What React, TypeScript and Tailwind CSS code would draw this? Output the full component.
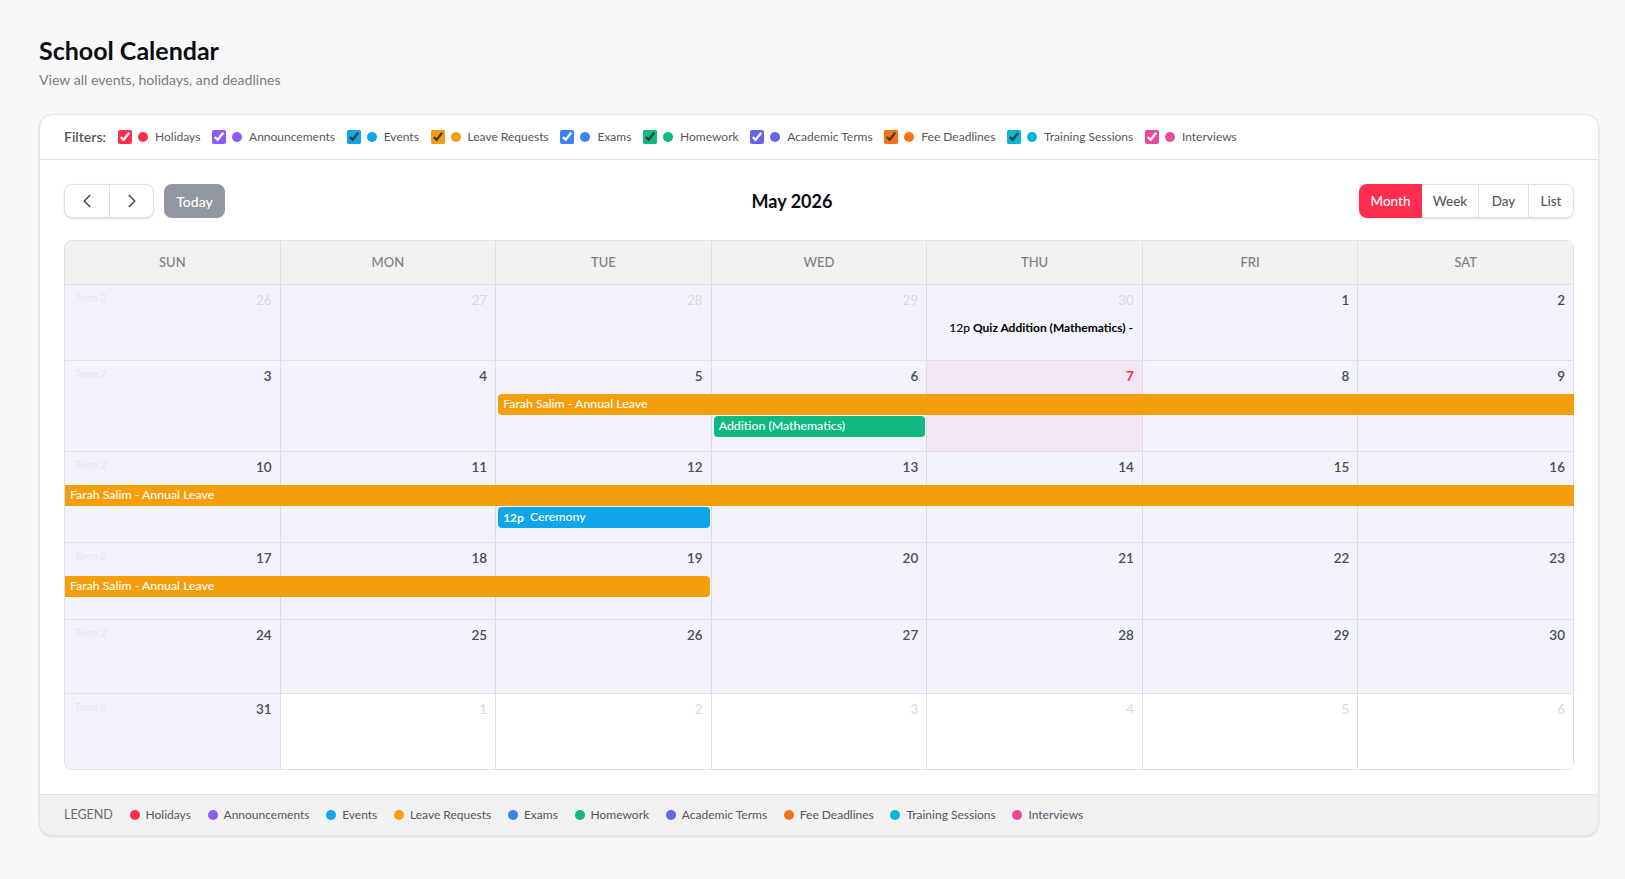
import { ChevronLeft, ChevronRight } from 'lucide-react';

const categories = [
	{ name: 'Holidays', color: '#ff2d4f' },
	{ name: 'Announcements', color: '#8b5cf6' },
	{ name: 'Events', color: '#0ea5e9' },
	{ name: 'Leave Requests', color: '#f59e0b' },
	{ name: 'Exams', color: '#3b82f6' },
	{ name: 'Homework', color: '#10b981' },
	{ name: 'Academic Terms', color: '#6366f1' },
	{ name: 'Fee Deadlines', color: '#f97316' },
	{ name: 'Training Sessions', color: '#06b6d4' },
	{ name: 'Interviews', color: '#ec4899' },
];

const dayNames = ['SUN', 'MON', 'TUE', 'WED', 'THU', 'FRI', 'SAT'];

type Ev = { col: number; span: number; row: number; label: string; time?: string; color: string; left?: boolean; right?: boolean };

const ORANGE = '#f59e0b';

const weeks: { height: string; days: number[]; events: Ev[] }[] = [
	{
		height: 'h-[76px]',
		days: [26, 27, 28, 29, 30, 1, 2],
		events: [{ col: 5, span: 1, row: 2, label: 'Quiz Addition (Mathematics) -', time: '12p', color: '' }],
	},
	{
		height: 'h-[91px]',
		days: [3, 4, 5, 6, 7, 8, 9],
		events: [
			{ col: 3, span: 5, row: 2, label: 'Farah Salim - Annual Leave', color: ORANGE, left: true },
			{ col: 4, span: 1, row: 3, label: 'Addition (Mathematics)', color: '#10b981', left: true, right: true },
		],
	},
	{
		height: 'h-[91px]',
		days: [10, 11, 12, 13, 14, 15, 16],
		events: [
			{ col: 1, span: 7, row: 2, label: 'Farah Salim - Annual Leave', color: ORANGE },
			{ col: 3, span: 1, row: 3, label: 'Ceremony', time: '12p', color: '#0ea5e9', left: true, right: true },
		],
	},
	{
		height: 'h-[77px]',
		days: [17, 18, 19, 20, 21, 22, 23],
		events: [{ col: 1, span: 3, row: 2, label: 'Farah Salim - Annual Leave', color: ORANGE, right: true }],
	},
	{ height: 'h-[74px]', days: [24, 25, 26, 27, 28, 29, 30], events: [] },
	{ height: 'h-[75px]', days: [31, 1, 2, 3, 4, 5, 6], events: [] },
];

function Dot({ color }: { color: string }) {
	return <span className="w-[10px] h-[10px] rounded-full shrink-0" style={{ backgroundColor: color }} />;
}

function Week({ week, index }: { week: (typeof weeks)[number]; index: number }) {
	return (
		<div className={`grid grid-cols-7 grid-rows-[33px_22px_minmax(0,22px)_minmax(0,1fr)] border-b border-[#e0e0e6] last:border-b-0 ${week.height}`}>
			{week.days.map((day, i) => {
				const inMonth = index === 0 ? i >= 5 : index === 5 ? i === 0 : true;
				const isToday = index === 1 && i === 4;
				const shaded = !(index === 5 && i > 0);
				return (
					<div
						key={i}
						className={`row-start-1 row-end-5 flex justify-between items-start pl-[10px] pr-[8px] pt-[5px] border-r border-[#dcdce4] ${isToday ? 'bg-[#f2e6f2]' : shaded ? 'bg-[#f2f3fc]' : 'bg-white'}`}
						style={{ gridColumn: i + 1 }}
					>
						{i === 0 ? <span className="text-[11px] italic text-[#e6e7ec] leading-[16px]">Term 2</span> : <span />}
						<span
							className={`text-[13.5px] leading-[20px] ${isToday ? 'font-bold text-[#ff2d4f]' : inMonth ? 'font-semibold text-[#4b4b52]' : 'font-medium text-[#d9dade]'}`}
						>
							{day}
						</span>
					</div>
				);
			})}
			{week.events.map((ev, i) => (
				<div
					key={i}
					className={`z-10 h-[21px] flex items-center whitespace-nowrap overflow-hidden font-medium ${ev.color ? 'text-white text-[12.3px] pl-[5px] gap-[6px]' : 'text-black text-[12px] pl-[22px] gap-[3px] pb-[2px]'} ${ev.left ? 'ml-[2px] rounded-l-[4px]' : ''} ${ev.right ? 'mr-[2px] rounded-r-[4px]' : ''}`}
					style={{ gridColumn: `${ev.col} / span ${ev.span}`, gridRow: ev.row, backgroundColor: ev.color || undefined }}
				>
					{ev.time && <span className={ev.color ? 'font-bold text-[12px]' : 'font-medium'}>{ev.time}</span>}
					<span className={ev.color ? '' : 'font-bold'}>{ev.label}</span>
				</div>
			))}
		</div>
	);
}

export default function App() {
	return (
		<div className="min-h-[879px] bg-[#f8f8f8] pl-[39px] pr-[26px] pt-[34px] font-['Lato','Liberation_Sans',sans-serif]">
			<h1 className="text-[25px] leading-[32px] font-bold text-[#0b0b10]">School Calendar</h1>
			<p className="text-[14.1px] leading-[20px] mt-[4px] text-[#7a7d83]">View all events, holidays, and deadlines</p>

			<div className="mt-[24px] bg-white border border-[#e4e4e4] rounded-[14px] shadow-sm overflow-hidden">
				{/* filters */}
				<div className="h-[45px] flex items-center px-[24px] border-b border-[#e4e4e4]">
					<span className="text-[14px] font-semibold text-[#55575c] mr-[12px] pb-[1px]">Filters:</span>
					<div className="flex items-center gap-[11.7px]">
						{categories.map((c) => (
							<label key={c.name} className="flex items-center gap-[6px] text-[12px] text-[#55575c]">
								<input type="checkbox" defaultChecked className="w-[14px] h-[14px] m-0" style={{ accentColor: c.color }} />
								<Dot color={c.color} />
								<span className="ml-[1px]">{c.name}</span>
							</label>
						))}
					</div>
				</div>

				<div className="pl-[24px] pr-[24px] pt-[24px] pb-[24px]">
					{/* toolbar */}
					<div className="h-[34px] flex items-center justify-between mb-[22px]">
						<div className="w-[161px] flex items-center gap-[10px]">
							<div className="flex h-[34px] border border-[#dedee2] rounded-[8px] shadow-sm bg-white text-[#4b4b52]">
								<button className="w-[45px] flex items-center justify-center border-r border-[#dedee2]">
									<ChevronLeft size={22} strokeWidth={1.8} />
								</button>
								<button className="w-[43px] flex items-center justify-center">
									<ChevronRight size={22} strokeWidth={1.8} />
								</button>
							</div>
							<button className="w-[62px] h-[34px] rounded-[8px] bg-[#9198a1] text-white text-[14px] font-medium">Today</button>
						</div>
						<h2 className="text-[18px] font-bold text-[#0b0b10]">May 2026</h2>
						<div className="flex h-[34px] rounded-[8px] shadow-sm overflow-hidden text-[13.5px] font-medium text-[#55575c]">
							<button className="w-[63px] bg-[#ff2d4f] text-white">Month</button>
							<button className="w-[57px] border-y border-r border-[#dedee2]">Week</button>
							<button className="w-[50px] border-y border-r border-[#dedee2]">Day</button>
							<button className="w-[45px] border-y border-r border-[#dedee2] rounded-r-[8px]">List</button>
						</div>
					</div>

					{/* calendar */}
					<div className="border border-[#e0e0e6] border-r-0 rounded-[8px] overflow-hidden">
						<div className="grid grid-cols-7 h-[44px] bg-[#f1f1f1] border-b border-[#e0e0e6]">
							{dayNames.map((d) => (
								<div key={d} className="flex items-center justify-center text-[13px] font-medium text-[#7c7f85] border-r border-[#e0e0e6]">
									{d}
								</div>
							))}
						</div>
						{weeks.map((week, i) => (
							<Week key={i} week={week} index={i} />
						))}
					</div>
				</div>

				{/* legend */}
				<div className="h-[41px] flex items-center px-[24px] gap-[16.7px] bg-[#f1f1f1] border-t border-[#e4e4e4] text-[12px] text-[#55575c]">
					<span className="text-[12.5px] text-[#696c72]">LEGEND</span>
					{categories.map((c) => (
						<span key={c.name} className="flex items-center gap-[6px]">
							<Dot color={c.color} />
							{c.name}
						</span>
					))}
				</div>
			</div>
		</div>
	);
}
